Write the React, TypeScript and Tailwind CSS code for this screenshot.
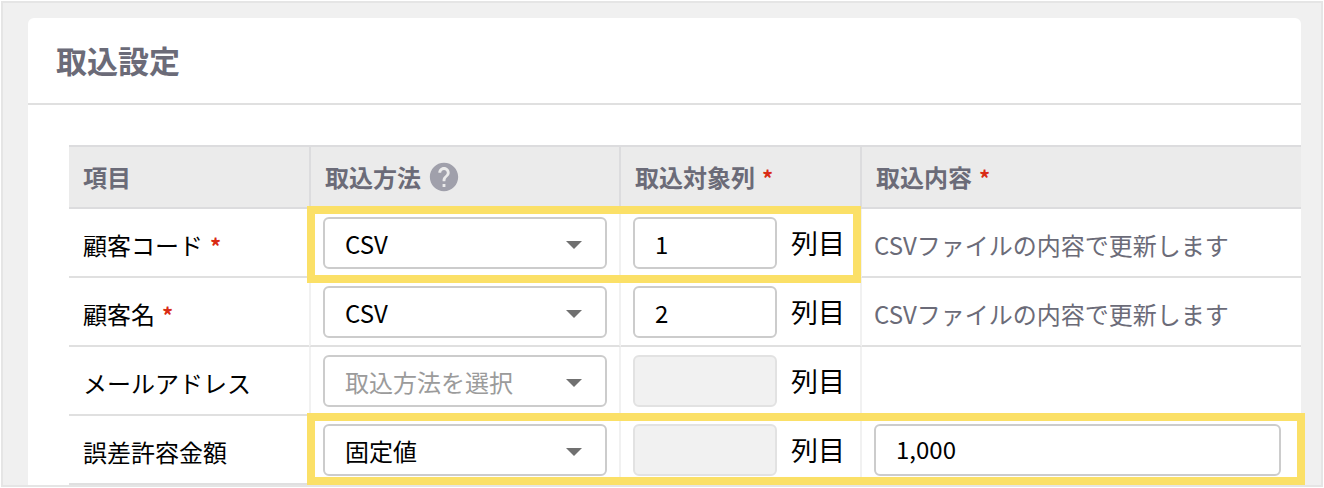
import { useState } from "react";
import clsx from "clsx";

type Row = {
  id: string;
  name: string;
  required?: boolean;
  method: string;
  column: string;
  value?: string;
  highlight?: "column" | "row";
};

const rows: Row[] = [
  { id: "code", name: "顧客コード", required: true, method: "csv", column: "1", highlight: "column" },
  { id: "name", name: "顧客名", required: true, method: "csv", column: "2" },
  { id: "mail", name: "メールアドレス", method: "", column: "" },
  { id: "margin", name: "誤差許容金額", method: "fixed", column: "", value: "1,000", highlight: "row" },
];

const field = "h-[52px] rounded-md border-2 px-5 text-2xl outline-none";

function Required() {
  return <span className="ml-[7px] text-[22px] font-bold text-[#d92b14]">*</span>;
}

function HelpIcon() {
  return (
    <svg viewBox="0 0 24 24" className="size-[34px]" fill="#a0a0ab" aria-hidden="true">
      <path d="M12 2C6.48 2 2 6.48 2 12s4.48 10 10 10 10-4.48 10-10S17.52 2 12 2zm1 17h-2v-2h2v2zm2.07-7.75-.9.92C13.45 12.9 13 13.5 13 15h-2v-.5c0-1.1.45-2.1 1.17-2.83l1.24-1.26c.37-.36.59-.86.59-1.41 0-1.1-.9-2-2-2s-2 .9-2 2H8c0-2.21 1.79-4 4-4s4 1.79 4 4c0 .88-.36 1.68-.93 2.25z" />
    </svg>
  );
}

function MethodSelect({ row, value, onChange }: { row: Row; value: string; onChange: (v: string) => void }) {
  return (
    <div className="relative">
      <select
        aria-label={`${row.name} 取込方法`}
        value={value}
        onChange={(e) => onChange(e.target.value)}
        className={clsx(
          field,
          "block w-full appearance-none border-[#cccccc] bg-white pt-0.5",
          value ? "text-black" : "text-[#9b9b9b]",
        )}
      >
        <option value="">取込方法を選択</option>
        <option value="csv">CSV</option>
        <option value="fixed">固定値</option>
      </select>
      <svg
        viewBox="0 0 16 8"
        className="pointer-events-none absolute top-6 right-[25px] h-2 w-4"
        fill="#707070"
        aria-hidden="true"
      >
        <path d="M0 0h16L8 8z" />
      </svg>
    </div>
  );
}

function ImportRow({ row }: { row: Row }) {
  const [method, setMethod] = useState(row.method);
  const disabled = method !== "csv";
  const cell = "border-b-2 border-b-[#e0e0e0]";
  const fieldCell = "px-3 pt-2 pb-[7px]";
  const textCell = "pt-2.5 pb-[5px]";

  return (
    <tr className="relative">
      <th scope="row" className={clsx(cell, textCell, "px-3.5 text-left font-normal")}>
        {row.name}
        {row.required && <Required />}
      </th>
      <td className={clsx(cell, fieldCell, "border-x-2 border-x-[#f1f1f1]")}>
        <MethodSelect row={row} value={method} onChange={setMethod} />
      </td>
      <td className={clsx(cell, fieldCell, "border-r-2 border-r-[#f1f1f1]")}>
        <div className="flex items-center gap-3.5">
          <input
            id={`${row.id}-column`}
            type="text"
            defaultValue={row.column}
            disabled={disabled}
            className={clsx(field, "w-36", disabled ? "border-[#e2e2e2] bg-[#f1f1f1]" : "border-[#cccccc] bg-white")}
          />
          <label htmlFor={`${row.id}-column`} className="text-[27px] leading-8 whitespace-nowrap">
            列目
          </label>
        </div>
      </td>
      <td className={clsx(cell, method === "fixed" ? fieldCell : textCell, "pr-5 pl-3 text-[#6b6b78]")}>
        {method === "csv" && <span>CSVファイルの内容で更新します</span>}
        {method === "fixed" && (
          <input
            type="text"
            aria-label={`${row.name} 取込内容`}
            defaultValue={row.value}
            className={clsx(field, "block w-full border-[#cccccc] bg-white pb-1 text-black")}
          />
        )}
        {row.highlight === "column" && (
          <div className="pointer-events-none absolute -top-[3px] -bottom-[5px] left-[238px] z-10 w-[554px] border-8 border-[#fbe067]" />
        )}
        {row.highlight === "row" && (
          <div className="pointer-events-none absolute -top-[3px] -right-1 bottom-0 left-[238px] z-10 border-8 border-[#fbe067]" />
        )}
      </td>
    </tr>
  );
}

export default function App() {
  const head = "h-16 border-y-2 border-y-[#dcdcde] px-3.5 text-left font-bold";

  return (
    <div className="bg-white p-px font-['Noto_Sans_CJK_JP','Noto_Sans',sans-serif] text-black">
      <main className="border-2 border-[#e5e5e5] bg-[#f0f0f0] pt-[15px] pr-5 pl-[25px]">
        <section className="rounded-t-md bg-white">
          <header className="border-b-2 border-[#e0e0e0] px-7 pt-5 pb-[21px]">
            <h1 className="text-[31px] leading-[44px] font-bold text-[#6b6b78]">取込設定</h1>
          </header>
          <div className="pt-10 pl-[41px]">
            <table className="w-full table-fixed border-separate border-spacing-0 text-2xl">
              <colgroup>
                <col className="w-[240px]" />
                <col className="w-[312px]" />
                <col className="w-[241px]" />
                <col />
              </colgroup>
              <thead className="bg-[#ebebeb] text-[#6b6b78]">
                <tr>
                  <th scope="col" className={head}>項目</th>
                  <th scope="col" className={clsx(head, "border-x-2 border-x-[#dcdcde]")}>
                    <span className="flex items-center gap-1.5">
                      取込方法
                      <HelpIcon />
                    </span>
                  </th>
                  <th scope="col" className={clsx(head, "border-r-2 border-r-[#dcdcde]")}>
                    取込対象列
                    <Required />
                  </th>
                  <th scope="col" className={head}>
                    取込内容
                    <Required />
                  </th>
                </tr>
              </thead>
              <tbody>
                {rows.map((row) => (
                  <ImportRow key={row.id} row={row} />
                ))}
              </tbody>
            </table>
          </div>
        </section>
      </main>
    </div>
  );
}
